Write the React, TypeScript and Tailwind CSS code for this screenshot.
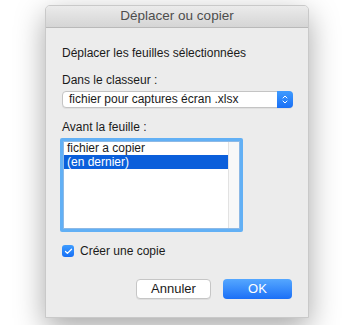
import { Check, ChevronDown, ChevronUp } from "lucide-react";

const font = { fontFamily: '"Liberation Sans", Arial, sans-serif' };

export default function App() {
  return (
    <div className="h-[325px] w-[349px] overflow-hidden bg-white pt-[5px] pl-[45px]" style={font}>
      <div className="flex h-[313px] w-[264px] flex-col overflow-hidden rounded-t-[5px] border border-[#c9c9c9] bg-[#ececec] shadow-[0_10px_30px_rgba(0,0,0,0.35)]">
        <div className="flex h-[22px] shrink-0 items-center justify-center border-b border-[#b9b9b9] bg-gradient-to-b from-[#ebebeb] to-[#d5d5d5] text-[13.5px] text-[#4d4d4d]">
          Déplacer ou copier
        </div>

        <div className="flex flex-col px-[16px] pt-[17px] text-[12px] text-[#1a1a1a]">
          <div className="leading-[16px]">Déplacer les feuilles sélectionnées</div>

          <div className="mt-[11px] leading-[16px]">Dans le classeur :</div>
          <div className="mt-[3px] flex h-[17px] w-[231px] items-center rounded-[4px] border border-[#c4c4c4] bg-white pl-[6px] shadow-[0_1px_0_rgba(0,0,0,0.05)]">
            <span className="flex-1 leading-[15px]">fichier pour captures écran .xlsx</span>
            <span className="-mr-px flex h-[17px] w-[16px] flex-col items-center justify-center rounded-r-[4px] bg-gradient-to-b from-[#3f9bff] to-[#1a6ff5] text-white">
              <ChevronUp className="-mb-[3px] h-[8px] w-[8px]" strokeWidth={3} />
              <ChevronDown className="h-[8px] w-[8px]" strokeWidth={3} />
            </span>
          </div>

          <div className="mt-[11px] leading-[16px]">Avant la feuille :</div>
          <div className="-ml-[2px] mt-[3px] h-[94px] w-[183px] rounded-[2px] bg-[#62b0f5] p-[3px]">
            <div className="flex h-full border border-[#8db9e6] bg-white">
              <div className="flex flex-1 flex-col">
                <div className="h-[13px] pl-[3px] leading-[13px]">fichier a copier</div>
                <div className="h-[14px] bg-[#0b5fdb] pl-[3px] leading-[14px] text-white">(en dernier)</div>
              </div>
              <div className="w-[11px] border-l border-[#e2e2e2] bg-[#f8f8f8]" />
            </div>
          </div>

          <div className="mt-[11px] flex h-[16px] items-center gap-[6px]">
            <span className="flex h-[12px] w-[12px] items-center justify-center rounded-[3px] bg-gradient-to-b from-[#3e9cff] to-[#166ef5] text-white">
              <Check className="h-[9px] w-[9px]" strokeWidth={3.5} />
            </span>
            <span className="leading-[16px]">Créer une copie</span>
          </div>

          <div className="mt-[20px] flex justify-end gap-[12px]">
            <button
              type="button"
              className="h-[20px] w-[75px] rounded-[4px] border border-[#c6c6c6] bg-white text-[13px] leading-[18px] text-[#1a1a1a] shadow-[0_1px_0_rgba(0,0,0,0.06)]"
            >
              Annuler
            </button>
            <button
              type="button"
              className="h-[20px] w-[69px] rounded-[4px] bg-gradient-to-b from-[#55a7ff] to-[#1b6ff6] text-[13px] leading-[20px] text-white"
            >
              OK
            </button>
          </div>
        </div>
      </div>
    </div>
  );
}
